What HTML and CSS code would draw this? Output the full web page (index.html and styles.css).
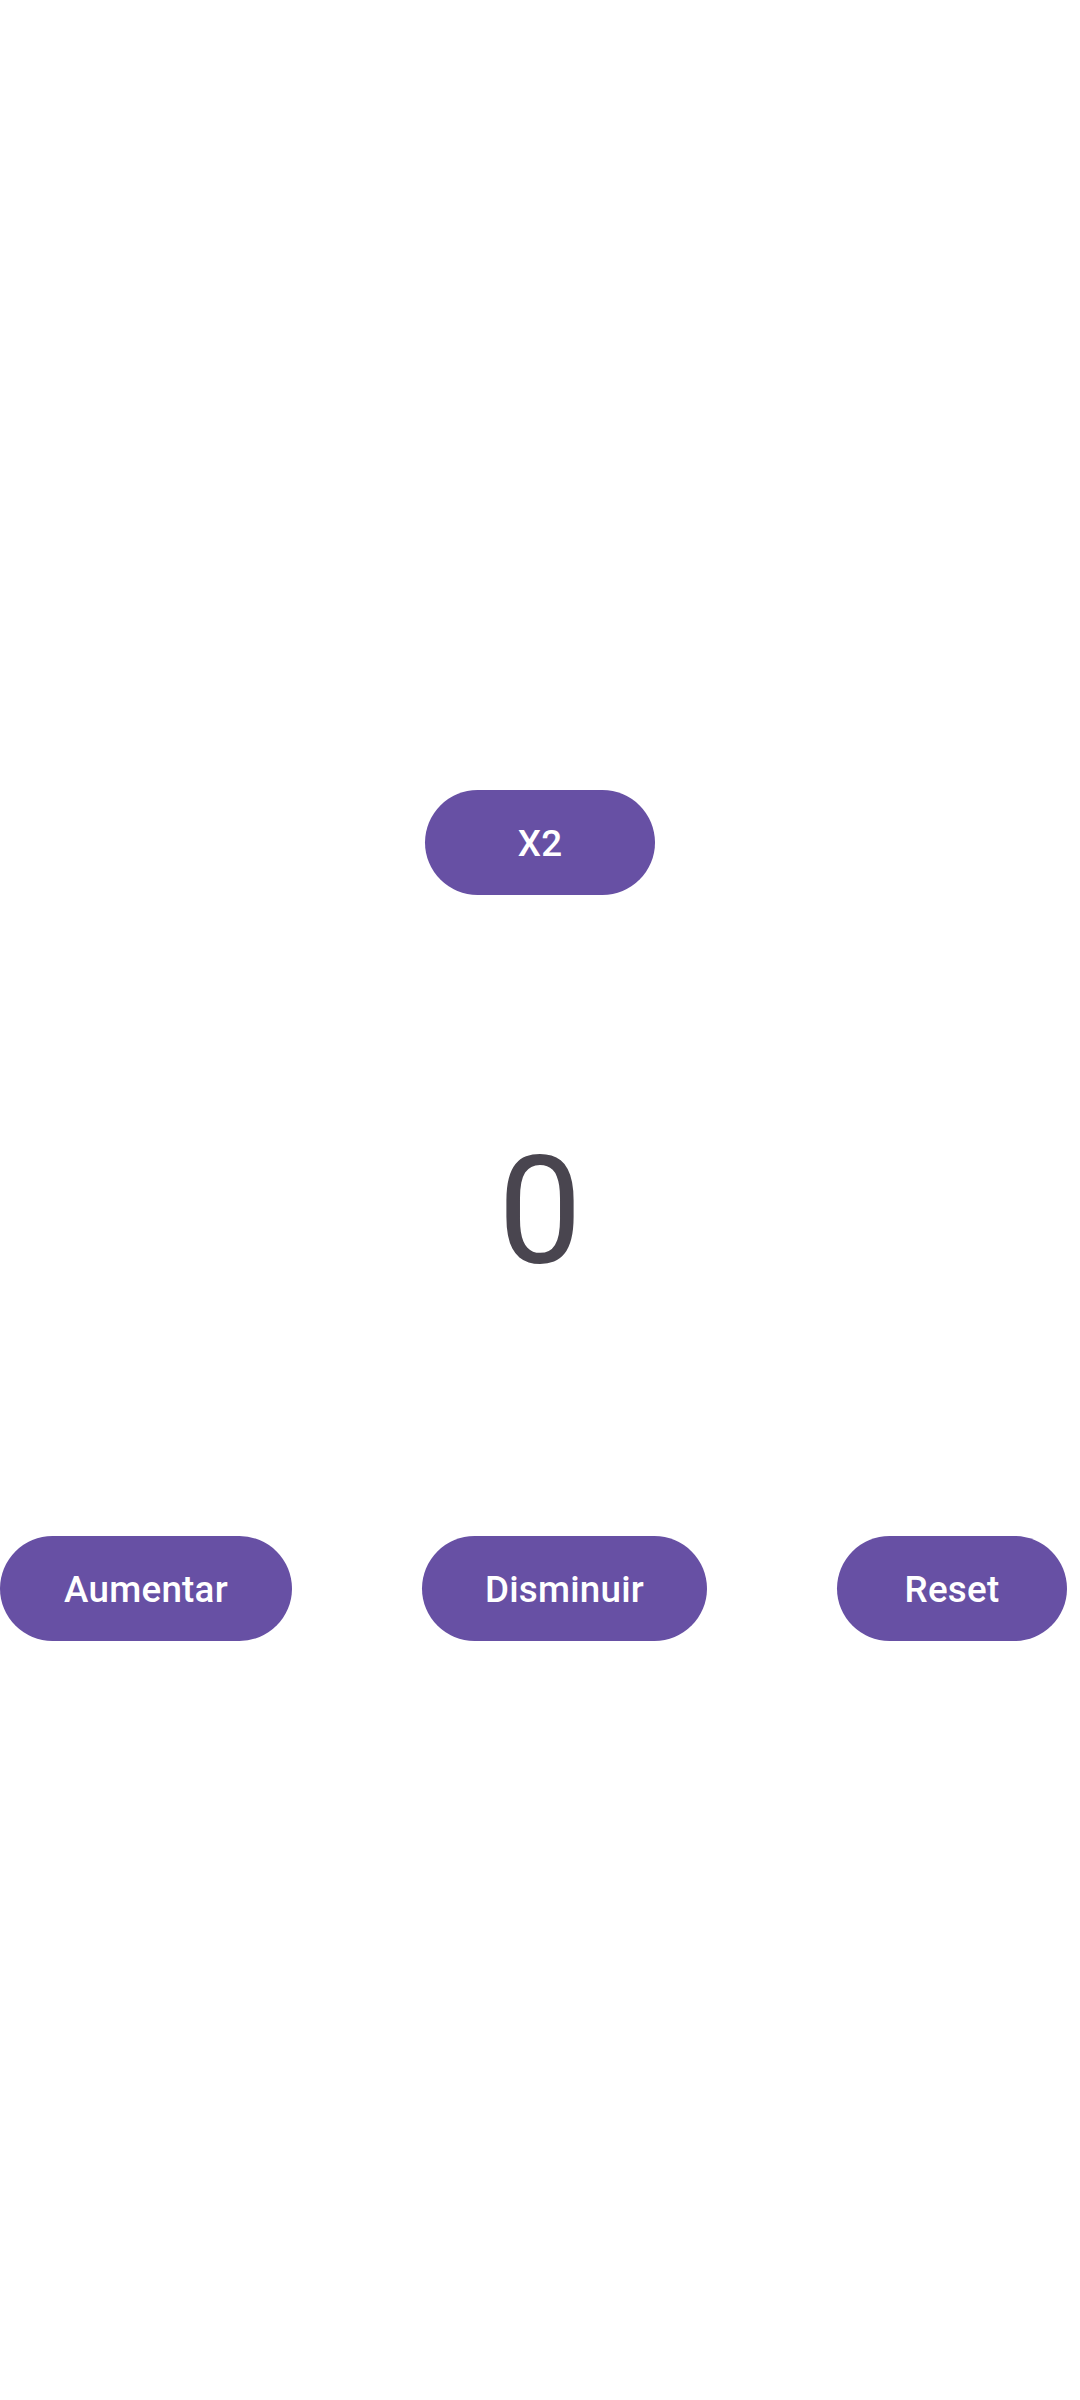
FILE: index.html
```html
<!DOCTYPE html>
<html>
<head>
<meta charset="utf-8">
<link rel="stylesheet" href="styles.css">
</head>
<body>
<main class="screen">
  <button class="btn btn-x2">X2</button>
  <div class="counter">0</div>
  <div class="row">
    <button class="btn btn-aumentar">Aumentar</button>
    <button class="btn btn-disminuir">Disminuir</button>
    <button class="btn btn-reset">Reset</button>
  </div>
</main>
</body>
</html>
```
FILE: styles.css
```css
html, body {
  margin: 0;
  padding: 0;
  background: #ffffff;
}
.screen {
  width: 1080px;
  height: 2400px;
  display: flex;
  flex-direction: column;
  align-items: center;
  padding-top: 790px;
  box-sizing: border-box;
  font-family: Roboto, "Noto Sans", sans-serif;
}
.btn {
  height: 105px;
  border: none;
  border-radius: 53px;
  background: #6750A4;
  color: #ffffff;
  font-family: Roboto, "Noto Sans", sans-serif;
  font-size: 36.75px;
  font-weight: 500;
  letter-spacing: 0.26px;
  display: flex;
  align-items: center;
  justify-content: center;
  padding: 2px 0 0 0;
  margin: 0;
  flex: none;
}
.btn-x2 { width: 230px; }
.btn-aumentar { width: 292px; }
.btn-disminuir { width: 285px; }
.btn-reset { width: 230px; }
.counter {
  margin-top: 242px;
  font-size: 149.6px;
  line-height: 150px;
  height: 150px;
  color: #49454F;
  font-weight: 400;
}
.row {
  margin-top: 249px;
  width: 1080px;
  display: flex;
  gap: 130px;
  justify-content: flex-start;
}
```
